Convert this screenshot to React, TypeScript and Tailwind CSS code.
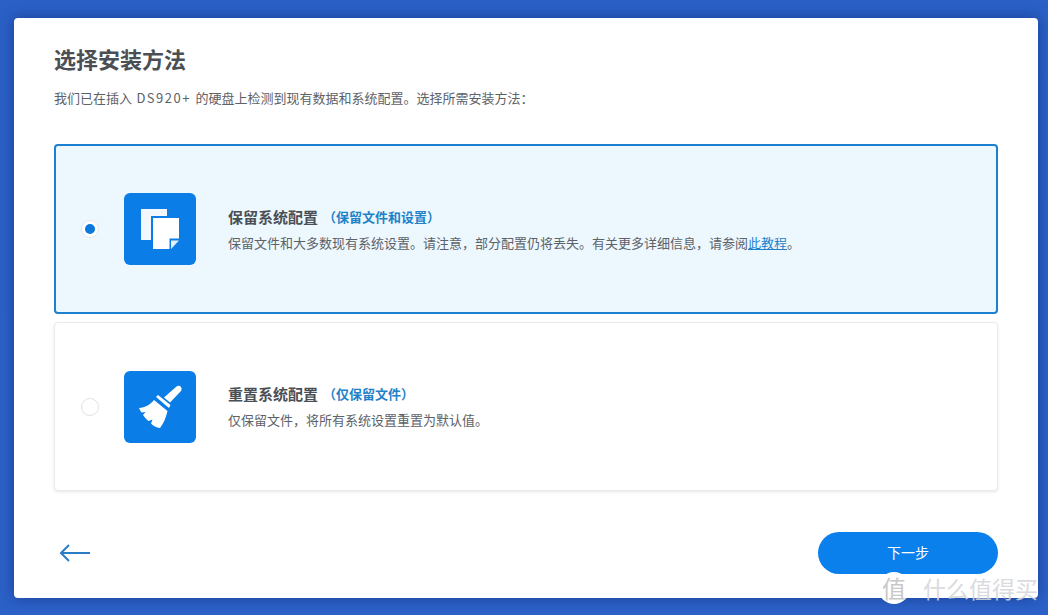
const font = { fontFamily: '"Noto Sans CJK SC", "Noto Sans", sans-serif' };

function CopyIcon() {
  return (
    <svg width="40" height="40" viewBox="0 0 40 40">
      <path d="M1 0H27V7H11V31H1Z" fill="#f2f8fe" />
      <path d="M13 9H39V29.5H29.5V40H13Z" fill="#fff" />
      <path d="M31 31.5H39L31 40Z" fill="#e3f0fc" />
    </svg>
  );
}

function BroomIcon() {
  return (
    <svg width="46" height="46" viewBox="0 0 46 46">
      <path d="M27 13.5 39.5 2.5C41 1.2 43 1.5 44 3 45 4.5 44.8 6 43.5 7.5L33 18.5Z" fill="#fff" />
      <path d="M19 13 21 11 33.5 21 32 24Z" fill="#fff" />
      <path d="M17 16 30.5 27C29 33 27 39 23 44 19 43.5 16.5 42 14 39.5L15.5 35.5 11.5 37C9 35 7.5 33 6 31L8.5 28 4.5 28.5C3.5 27 2.5 25.5 2 24 8 23.5 13 21 17 16Z" fill="#fff" />
    </svg>
  );
}

function Radio({ on }: { on: boolean }) {
  return (
    <div className={on ? 'flex h-[18px] w-[18px] items-center justify-center rounded-full border border-[#e3e8ee] bg-white' : 'h-[18px] w-[18px] rounded-full border border-[#dfe2e5] bg-white'}>
      {on && <div className="h-[10px] w-[10px] rounded-full bg-[#0a78dc]" />}
    </div>
  );
}

function Option(props: { on: boolean; icon: React.ReactNode; title: string; note: string; children: React.ReactNode }) {
  return (
    <div className={props.on
      ? 'flex h-[170px] items-center rounded-[4px] border-2 border-[#1b80cf] bg-[#edf7fe] pl-[25px]'
      : 'flex h-[169px] items-center rounded-[4px] border border-[#e9ecef] bg-white pl-[26px] shadow-[0_1px_3px_rgba(0,0,0,0.1)]'}>
      <Radio on={props.on} />
      <div className="ml-[25px] flex h-[72px] w-[72px] items-center justify-center rounded-[6px] bg-[#0b7de6]">
        {props.icon}
      </div>
      <div className="ml-[32px]">
        <div className="flex items-center text-[15px] leading-[20px] font-bold text-[#4a4f55]">
          {props.title}
          <span className="ml-[5px] text-[13px] text-[#1f82c9]">{props.note}</span>
        </div>
        <div className="mt-[7px] text-[13px] leading-[18px] text-[#5c6268]">{props.children}</div>
      </div>
    </div>
  );
}

export default function App() {
  return (
    <div style={font} className="relative flex h-[615px] w-[1048px] overflow-hidden bg-[linear-gradient(180deg,#2b60c6,#2c61c8)] pt-[18px] pb-[17px] pl-[14px] pr-[10px]">
      <div className="flex flex-1 flex-col rounded-[4px] bg-white px-[40px] shadow-[0_0_14px_rgba(15,45,120,0.65)]">
        <h1 className="mt-[26px] text-[22px] leading-[28px] font-bold text-[#4b4f54]">选择安装方法</h1>
        <p className="mt-[17px] text-[13px] leading-[18px] text-[#5c6268]">
          我们已在插入<span className="tracking-[1.5px]"> DS920+ </span>的硬盘上检测到现有数据和系统配置。选择所需安装方法：
        </p>

        <div className="mt-[37px] flex flex-col gap-[8px]">
          <Option on icon={<CopyIcon />} title="保留系统配置" note="（保留文件和设置）">
            保留文件和大多数现有系统设置。请注意，部分配置仍将丢失。有关更多详细信息，请参阅
            <a className="text-[#1f82c9] underline">此教程</a>。
          </Option>
          <Option on={false} icon={<BroomIcon />} title="重置系统配置" note="（仅保留文件）">
            仅保留文件，将所有系统设置重置为默认值。
          </Option>
        </div>

        <div className="mt-[41px] flex items-center justify-between">
          <svg width="32" height="20" viewBox="0 0 32 20" className="ml-[5px]" fill="none" stroke="#2a7cc6" strokeWidth="2">
            <path d="M31 10H3" />
            <path d="M10 2 2 10l8 8" />
          </svg>
          <button className="h-[42px] w-[180px] rounded-full bg-[#0a80ec] pb-[2px] text-[14px] font-normal text-white">下一步</button>
        </div>
      </div>

      {/* watermark */}
      <div className="absolute top-[572px] left-[878px] flex h-[32px] w-[32px] items-center justify-center rounded-full bg-white text-[24px] text-[#c8c8c8]">值</div>
      <div className="absolute top-[575px] left-[923px] text-[23px] leading-[26px] text-[#d4d6da]/90">什么值得买</div>
    </div>
  );
}
